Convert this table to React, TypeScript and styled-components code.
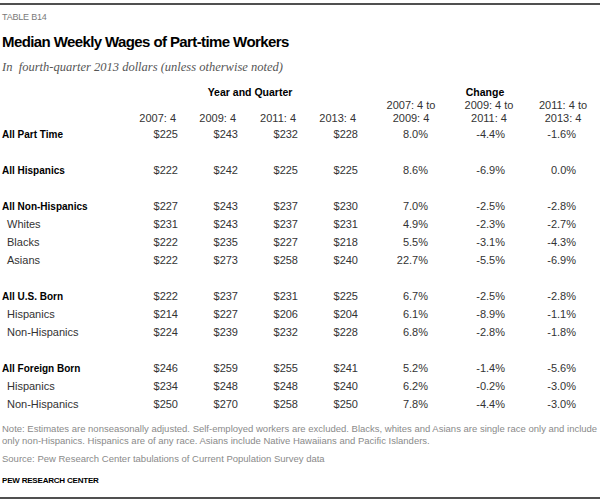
import styled, { createGlobalStyle } from "styled-components";

const GlobalStyle = createGlobalStyle`
    html, body {
        margin: 0;
        padding: 0;
        background: #ffffff;
    }
    body {
        font-family: "Liberation Sans", Arial, sans-serif;
        color: #333333;
    }
`;

type Row = { label?: string; bold?: boolean; values?: string[] };

const columns = [
    { width: 130, pad: 0 },
    { width: 48, pad: 0 },
    { width: 60, pad: 0 },
    { width: 60, pad: 0 },
    { width: 72, pad: 12 },
    { width: 82, pad: 24 },
    { width: 74, pad: 21 },
    { width: 74, pad: 24 },
];

const rows: Row[] = [
    { label: "All Part Time", bold: true, values: ["$225", "$243", "$232", "$228", "8.0%", "-4.4%", "-1.6%"] },
    {},
    { label: "All Hispanics", bold: true, values: ["$222", "$242", "$225", "$225", "8.6%", "-6.9%", "0.0%"] },
    {},
    { label: "All Non-Hispanics", bold: true, values: ["$227", "$243", "$237", "$230", "7.0%", "-2.5%", "-2.8%"] },
    { label: "Whites", values: ["$231", "$243", "$237", "$231", "4.9%", "-2.3%", "-2.7%"] },
    { label: "Blacks", values: ["$222", "$235", "$227", "$218", "5.5%", "-3.1%", "-4.3%"] },
    { label: "Asians", values: ["$222", "$273", "$258", "$240", "22.7%", "-5.5%", "-6.9%"] },
    {},
    { label: "All U.S. Born", bold: true, values: ["$222", "$237", "$231", "$225", "6.7%", "-2.5%", "-2.8%"] },
    { label: "Hispanics", values: ["$214", "$227", "$206", "$204", "6.1%", "-8.9%", "-1.1%"] },
    { label: "Non-Hispanics", values: ["$224", "$239", "$232", "$228", "6.8%", "-2.8%", "-1.8%"] },
    {},
    { label: "All Foreign Born", bold: true, values: ["$246", "$259", "$255", "$241", "5.2%", "-1.4%", "-5.6%"] },
    { label: "Hispanics", values: ["$234", "$248", "$248", "$240", "6.2%", "-0.2%", "-3.0%"] },
    { label: "Non-Hispanics", values: ["$250", "$270", "$258", "$250", "7.8%", "-4.4%", "-3.0%"] },
];

const yearHeads = ["2007: 4", "2009: 4", "2011: 4", "2013: 4"];
const changeHeads = [
    ["2007: 4 to", "2009: 4"],
    ["2009: 4 to", "2011: 4"],
    ["2011: 4 to", "2013: 4"],
];

export default function App() {
    return (
        <>
            <GlobalStyle />
            <Page>
                <Kicker>TABLE B14</Kicker>
                <Title>Median Weekly Wages of Part-time Workers</Title>
                <Subtitle>In&nbsp; fourth-quarter 2013 dollars (unless otherwise noted)</Subtitle>

                <Table>
                    <colgroup>
                        {columns.map((c, i) => (
                            <col key={i} style={{ width: c.width }} />
                        ))}
                    </colgroup>
                    <thead>
                        <tr>
                            <th />
                            <GroupHead colSpan={4}>Year and Quarter</GroupHead>
                            <GroupHead colSpan={3}>Change</GroupHead>
                        </tr>
                        <tr>
                            <th />
                            {yearHeads.map((h, i) => (
                                <ColHead key={h} $pad={columns[i + 1].pad}>{h}</ColHead>
                            ))}
                            {changeHeads.map((h) => (
                                <ChangeHead key={h[0]}>
                                    {h[0]}
                                    <br />
                                    {h[1]}
                                </ChangeHead>
                            ))}
                        </tr>
                    </thead>
                    <tbody>
                        {rows.map((r, i) =>
                            r.label ? (
                                <DataRow key={i}>
                                    <Label $bold={!!r.bold}>{r.label}</Label>
                                    {r.values!.map((v, j) => (
                                        <Cell key={j} $pad={columns[j + 1].pad}>{v}</Cell>
                                    ))}
                                </DataRow>
                            ) : (
                                <Spacer key={i}>
                                    <td colSpan={8} />
                                </Spacer>
                            )
                        )}
                    </tbody>
                </Table>

                <Note>
                    Note: Estimates are nonseasonally adjusted. Self-employed workers are excluded. Blacks, whites and Asians are single race only and include
                    <br />
                    only non-Hispanics. Hispanics are of any race. Asians include Native Hawaiians and Pacific Islanders.
                </Note>
                <Source>Source: Pew Research Center tabulations of Current Population Survey data</Source>
                <Brand>PEW RESEARCH CENTER</Brand>
            </Page>
        </>
    );
}

const Page = styled.div`
    width: 600px;
    box-sizing: border-box;
    margin-top: 3px;
    border-top: 2px solid #505050;
    border-bottom: 2px solid #505050;
    height: 496px;
    overflow: hidden;
`;

const Kicker = styled.div`
    margin: 7px 0 0 2px;
    font-size: 9px;
    line-height: 11px;
    color: #7a7a7a;
    letter-spacing: -0.2px;
`;

const Title = styled.h1`
    margin: 10px 0 0 2px;
    font-size: 15px;
    line-height: 18px;
    font-weight: bold;
    letter-spacing: -0.6px;
    color: #000000;
`;

const Subtitle = styled.div`
    margin: 9px 0 0 2px;
    font-family: "Liberation Serif", Georgia, serif;
    font-style: italic;
    font-size: 12.5px;
    line-height: 15px;
    color: #555555;
`;

const Table = styled.table`
    margin-top: 11px;
    width: 600px;
    table-layout: fixed;
    border-collapse: collapse;
    border-spacing: 0;
    font-size: 11px;
    color: #333333;

    th, td {
        padding: 0;
    }
`;

const GroupHead = styled.th`
    height: 13px;
    line-height: 13px;
    font-size: 10.5px;
    font-weight: bold;
    color: #000000;
    text-align: center;
`;

const ColHead = styled.th<{ $pad: number }>`
    font-weight: normal;
    line-height: 13px;
    text-align: right;
    vertical-align: bottom;
    padding-right: ${(p) => p.$pad + 2}px !important;
    white-space: nowrap;
`;

const ChangeHead = styled.th`
    font-weight: normal;
    line-height: 13px;
    text-align: center;
    vertical-align: bottom;
    white-space: nowrap;
`;

const DataRow = styled.tr`
    height: 18px;
`;

const Spacer = styled.tr`
    height: 18px;
`;

const Label = styled.td<{ $bold: boolean }>`
    white-space: nowrap;
    font-size: ${(p) => (p.$bold ? "10px" : "11px")};
    font-weight: ${(p) => (p.$bold ? "bold" : "normal")};
    color: ${(p) => (p.$bold ? "#000000" : "#333333")};
    padding-left: ${(p) => (p.$bold ? 2 : 7)}px !important;
`;

const Cell = styled.td<{ $pad: number }>`
    text-align: right;
    padding-right: ${(p) => p.$pad}px !important;
    white-space: nowrap;
`;

const Note = styled.p`
    margin: 10px 0 0 2px;
    font-size: 9.5px;
    line-height: 12px;
    color: #8a8a8a;
    white-space: nowrap;
`;

const Source = styled.p`
    margin: 6px 0 0 2px;
    font-size: 9.5px;
    line-height: 12px;
    color: #8a8a8a;
`;

const Brand = styled.p`
    margin: 10px 0 0 2px;
    font-size: 8px;
    line-height: 12px;
    font-weight: bold;
    letter-spacing: -0.2px;
    color: #000000;
`;
